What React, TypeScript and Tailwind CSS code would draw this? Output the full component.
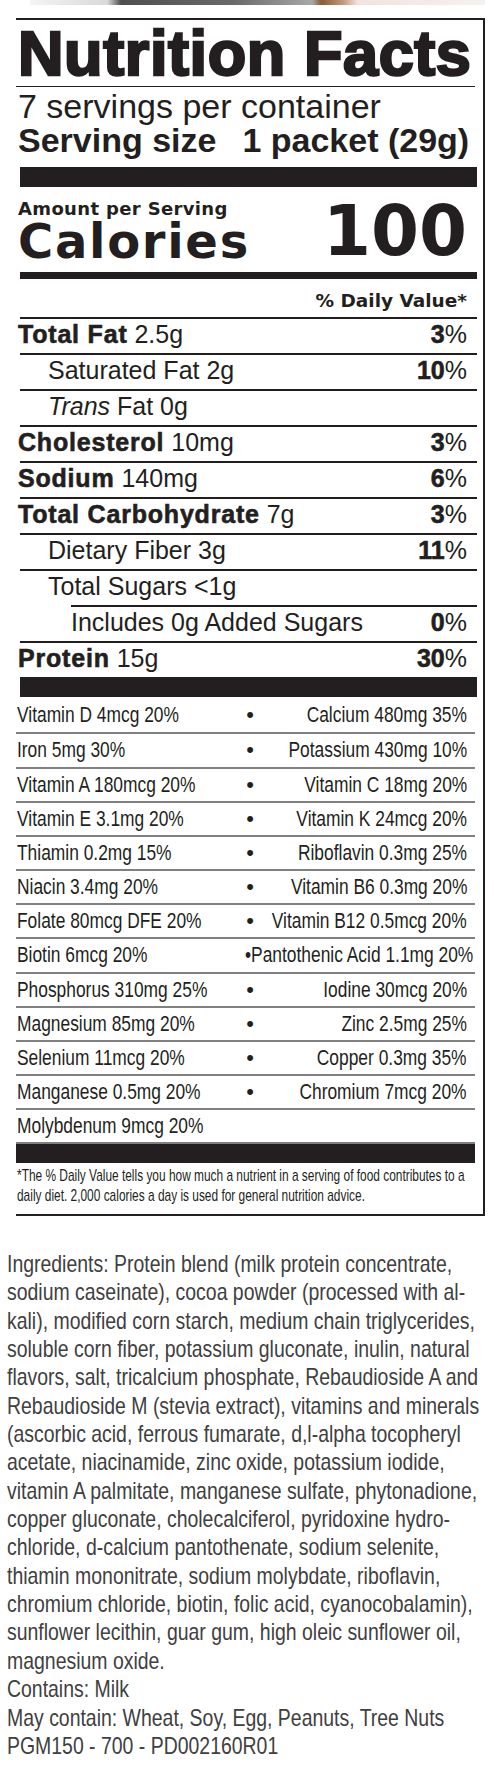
import React from 'react';

const sans = "font-['Liberation_Sans',Arial,sans-serif]";
const heavy = "font-['DejaVu_Sans',sans-serif]";

type Nutrient = {
  label: string;
  amount?: string;
  bold?: boolean;
  italic?: string;
  dv?: string;
  indent?: 'one' | 'two';
};

const nutrients: Nutrient[] = [
  { label: 'Total Fat', amount: '2.5g', bold: true, dv: '3' },
  { label: 'Saturated Fat 2g', indent: 'one', dv: '10' },
  { label: ' Fat 0g', italic: 'Trans', indent: 'one' },
  { label: 'Cholesterol', amount: '10mg', bold: true, dv: '3' },
  { label: 'Sodium', amount: '140mg', bold: true, dv: '6' },
  { label: 'Total Carbohydrate', amount: '7g', bold: true, dv: '3' },
  { label: 'Dietary Fiber 3g', indent: 'one', dv: '11' },
  { label: 'Total Sugars <1g', indent: 'one' },
  { label: 'Includes 0g Added Sugars', indent: 'two', dv: '0' },
  { label: 'Protein', amount: '15g', bold: true, dv: '30' },
];

// [left, right, row height]
const vitamins: [string, string | null, number][] = [
  ['Vitamin D 4mcg 20%', 'Calcium 480mg 35%', 35],
  ['Iron 5mg 30%', 'Potassium 430mg 10%', 35],
  ['Vitamin A 180mcg 20%', 'Vitamin C 18mg 20%', 34],
  ['Vitamin E 3.1mg 20%', 'Vitamin K 24mcg 20%', 34],
  ['Thiamin 0.2mg 15%', 'Riboflavin 0.3mg 25%', 34],
  ['Niacin 3.4mg 20%', 'Vitamin B6 0.3mg 20%', 34],
  ['Folate 80mcg DFE 20%', 'Vitamin B12 0.5mcg 20%', 34],
  ['Biotin 6mcg 20%', 'Pantothenic Acid 1.1mg 20%', 35],
  ['Phosphorus 310mg 25%', 'Iodine 30mcg 20%', 34],
  ['Magnesium 85mg 20%', 'Zinc 2.5mg 25%', 34],
  ['Selenium 11mcg 20%', 'Copper 0.3mg 35%', 34],
  ['Manganese 0.5mg 20%', 'Chromium 7mcg 20%', 34],
  ['Molybdenum 9mcg 20%', null, 34],
];

const ingredients = [
  'Ingredients: Protein blend (milk protein concentrate,',
  'sodium caseinate), cocoa powder (processed with al-',
  'kali), modified corn starch, medium chain triglycerides,',
  'soluble corn fiber, potassium gluconate, inulin, natural',
  'flavors, salt, tricalcium phosphate, Rebaudioside A and',
  'Rebaudioside M (stevia extract), vitamins and minerals',
  '(ascorbic acid, ferrous fumarate, d,l-alpha tocopheryl',
  'acetate, niacinamide, zinc oxide, potassium iodide,',
  'vitamin A palmitate, manganese sulfate, phytonadione,',
  'copper gluconate, cholecalciferol, pyridoxine hydro-',
  'chloride, d-calcium pantothenate, sodium selenite,',
  'thiamin mononitrate, sodium molybdate, riboflavin,',
  'chromium chloride, biotin, folic acid, cyanocobalamin),',
  'sunflower lecithin, guar gum, high oleic sunflower oil,',
  'magnesium oxide.',
  'Contains: Milk',
  'May contain: Wheat, Soy, Egg, Peanuts, Tree Nuts',
  'PGM150 - 700 - PD002160R01',
];

// strip of the product photo that peeks in at the top
const PhotoEdge = () => (
  <svg width="494" height="6" viewBox="0 0 494 6" className="block">
    <defs>
      <linearGradient id="edge" x1="0" x2="1" y1="0" y2="0">
        <stop offset="0" stopColor="#f4f4f4" />
        <stop offset="0.17" stopColor="#d9d9d9" />
        <stop offset="0.2" stopColor="#4f4f4f" />
        <stop offset="0.45" stopColor="#6a6a6a" />
        <stop offset="0.62" stopColor="#a8a8a8" />
        <stop offset="0.64" stopColor="#8b5a36" />
        <stop offset="0.69" stopColor="#c79a82" />
        <stop offset="0.72" stopColor="#f1e3df" />
        <stop offset="1" stopColor="#f6f1f0" />
      </linearGradient>
    </defs>
    <rect x="30" y="0" width="455" height="5" fill="url(#edge)" />
  </svg>
);

const NutrientRow = ({ n }: { n: Nutrient }) => {
  const pad = n.indent === 'one' ? 'ml-[2px] pl-[28px]' : n.indent === 'two' ? 'ml-[53px]' : 'ml-[2px] pl-0';
  return (
    <div className={`${pad} h-[36px] border-t-2 border-[#231f20] flex justify-between pr-[10px] text-[25px] leading-[30px] whitespace-nowrap`}>
      <span className={n.indent ? '' : '-ml-[2px]'}>
        {n.bold && (
          <span className="font-bold tracking-[0.8px] [-webkit-text-stroke:0.6px_#231f20]">{n.label}</span>
        )}
        {n.italic && <span className="italic">{n.italic}</span>}
        {n.bold ? ` ${n.amount}` : n.label}
      </span>
      {n.dv && (
        <span>
          <span className="font-bold [-webkit-text-stroke:0.6px_#231f20]">{n.dv}</span>%
        </span>
      )}
    </div>
  );
};

// condensed type: Helvetica Condensed isn't installed, so squeeze Liberation Sans
const Squeeze = ({ children, right }: { children: React.ReactNode; right?: boolean }) => (
  <span className={`inline-block shrink-0 ${right ? 'origin-right' : 'origin-left'} scale-x-[0.79]`}>{children}</span>
);

export default function App() {
  return (
    <div className={`w-[494px] h-[1780px] bg-white text-[#231f20] ${sans} overflow-hidden`}>
      <PhotoEdge />

      {/* label box */}
      <div className="mt-[12px] ml-[16px] w-[469px] border-t-2 border-r-2 border-b-2 border-[#231f20]">
        <h1 className="pt-[2px] pl-[2px] text-[63px] leading-[63px] font-bold tracking-[0.6px] [-webkit-text-stroke:2.5px_#231f20] whitespace-nowrap">
          Nutrition Facts
        </h1>
        <div className="mt-[1px] mr-[8px] h-[1px] bg-[#231f20]" />
        <div className="mt-[2px] pl-[2px] text-[34px] leading-[34px] whitespace-nowrap">7 servings per container</div>
        <div className="pl-[2px] flex text-[34px] leading-[34px] font-bold whitespace-nowrap">
          <span>Serving size</span>
          <span className="ml-[26px]">1 packet (29g)</span>
        </div>

        <div className="pl-[2px] pr-[6px]">
          <div className="mt-[10px] ml-[2px] h-[20px] bg-[#231f20]" />

          <div className="flex justify-between items-start">
            <div className={heavy}>
              <div className="mt-[14px] text-[18px] leading-[16px] font-bold tracking-[0.35px] whitespace-nowrap">
                Amount per Serving
              </div>
              <div className="mt-[4px] text-[48px] leading-[40px] font-bold tracking-[1.7px] whitespace-nowrap">
                Calories
              </div>
            </div>
            <div className={`${heavy} mt-[10px] pr-[10px] text-[69px] leading-[69px] font-bold`}>100</div>
          </div>

          <div className="mt-[6px] ml-[2px] h-[7px] bg-[#231f20]" />

          <div className={`${heavy} mt-[12px] pr-[10px] text-right text-[18.5px] leading-[20px] font-bold whitespace-nowrap`}>
            % Daily Value*
          </div>

          <div className="mt-[6px]">
            {nutrients.map((n) => (
              <NutrientRow key={n.label} n={n} />
            ))}
          </div>

          <div className="ml-[2px] h-[20px] bg-[#231f20]" />

          {/* vitamins and minerals */}
          <div className="-ml-[2px] mr-[2px] text-[22px]">
            {vitamins.map(([left, right, h], i) => (
              <div
                key={left}
                style={{ height: h }}
                className={`flex pl-[1px] pr-[8px] whitespace-nowrap ${i === 0 ? 'leading-[35px]' : 'border-t-2 border-[#808080] leading-[31px]'}`}
              >
                <span className="w-[228px] shrink-0 flex">
                  <Squeeze>{left}</Squeeze>
                </span>
                {right && right.startsWith('Pantothenic') ? (
                  <span className="flex">
                    <Squeeze>•{right}</Squeeze>
                  </span>
                ) : right ? (
                  <>
                    <span className="w-[10px] shrink-0 text-center">•</span>
                    <span className="flex-1 min-w-0 flex justify-end">
                      <Squeeze right>{right}</Squeeze>
                    </span>
                  </>
                ) : null}
              </div>
            ))}
            <div className="h-[2px] bg-[#808080]" />
            <div className="h-[19px] bg-[#231f20]" />
            <div className="pt-[3px] pb-[8px] pl-[1px] text-[17px] leading-[20px] whitespace-nowrap">
              <div className="origin-left scale-x-[0.7] w-max">
                *The % Daily Value tells you how much a nutrient in a serving of food contributes to a
              </div>
              <div className="origin-left scale-x-[0.7] w-max">
                daily diet. 2,000 calories a day is used for general nutrition advice.
              </div>
            </div>
          </div>
        </div>
      </div>

      {/* ingredients */}
      <div className="mt-[34px] ml-[7px] text-[24px] leading-[28.35px] text-[#404040]">
        {ingredients.map((line) => (
          <div key={line} className="whitespace-nowrap origin-left scale-x-[0.81] w-max">
            {line}
          </div>
        ))}
      </div>
    </div>
  );
}
